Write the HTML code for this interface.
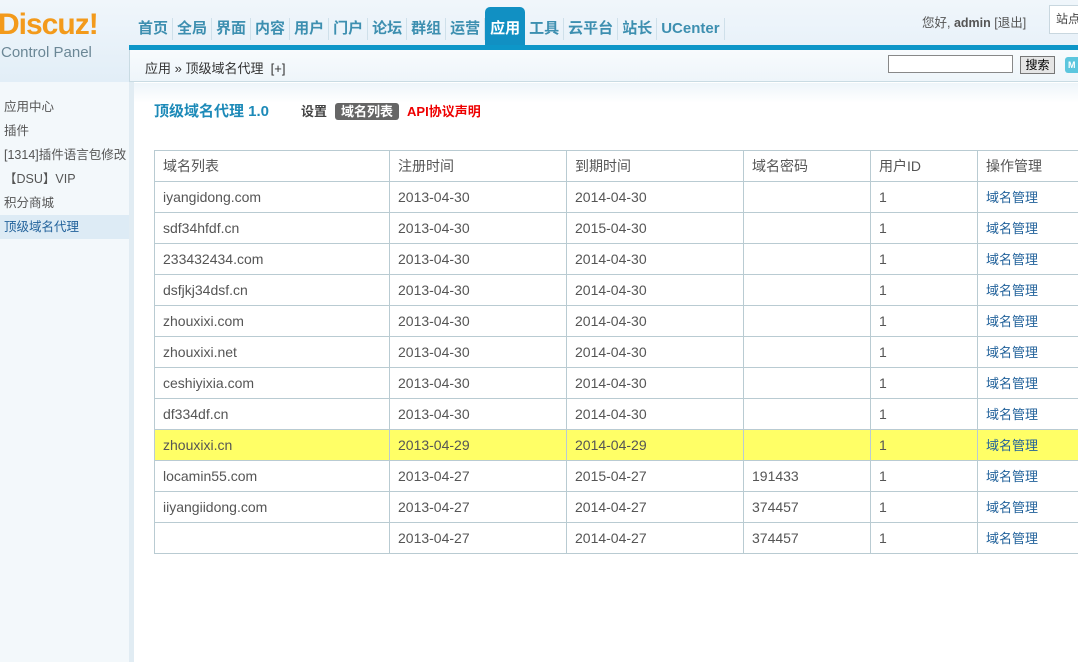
<!DOCTYPE html>
<html><head><meta charset="utf-8"><style>
*{margin:0;padding:0;box-sizing:border-box}
body{width:1078px;height:662px;overflow:hidden;background:#fff;font-family:"Liberation Sans","Noto Sans CJK SC",sans-serif;font-size:12px;color:#333;position:relative}
.top{position:absolute;left:0;top:0;width:1078px;height:82px;background:linear-gradient(#f0f6fb,#e2eef7)}
.logo1{position:absolute;left:-2px;top:8px;font:bold 30px "Liberation Sans",sans-serif;color:#f39a1b;letter-spacing:-1px}
.logo2{position:absolute;left:1px;top:44px;font-size:15px;color:#6b8796}
.nav{position:absolute;left:134px;top:18px;display:flex;font-size:15px;color:#3d8fb0;font-weight:bold}
.nav span{padding:0 4px;border-right:1px solid #cfe0ea;height:22px;line-height:22px}
.nav .act{background:#1190c3;color:#fff;border-radius:5px 5px 0 0;height:38px;margin-top:-11px;line-height:44px;padding:0 5px;border:none}
.bar{position:absolute;left:129px;top:45px;width:949px;height:5px;background:#0d96c8}
.crumb{position:absolute;left:129px;top:50px;width:949px;height:32px;background:linear-gradient(#f8fbfd,#eef5fa);border-bottom:1px solid #c9dbe3;border-left:1px solid #c9dbe3}
.crumb .t{position:absolute;left:15px;top:8px;font-size:13px;color:#333}
.srch{position:absolute;left:758px;top:5px;width:125px;height:18px;border:1px solid #888;background:#fff}
.sbtn{position:absolute;left:890px;top:6px;width:35px;height:18px;border:1px solid #777;background:#e5e5e5;font-size:12px;text-align:center;line-height:16px;color:#000}
.m{position:absolute;left:935px;top:7px;width:16px;height:16px;background:#5cc6de;border-radius:3px;color:#fff;font-size:9px;font-weight:bold;line-height:16px;padding-left:3px}
.user{position:absolute;left:922px;top:12px;font-size:12.5px;color:#555}
.zd{position:absolute;left:1049px;top:5px;width:40px;height:29px;border:1px solid #c9d7df;background:#fff;font-size:12px;line-height:27px;padding-left:6px;color:#444}
.main{position:absolute;left:134px;top:83px;width:944px;height:20px;background:linear-gradient(#eef5fa,#fff)}
.side{position:absolute;left:0;top:82px;width:134px;height:580px;background:#f3f8fb;border-right:5px solid #e1ecf3}
.side div{height:24px;line-height:24px;padding-left:4px;font-size:12.5px;color:#555;white-space:nowrap;overflow:hidden}
.side .on{background:#ddebf5;color:#22629b}
.title{position:absolute;left:154px;top:100px;font-size:15px;font-weight:bold;color:#1d8ab8}
.tabs{position:absolute;left:301px;top:101px;font-size:13px;font-weight:bold}
.tabs .a{background:#666;color:#fff;padding:1px 6px;border-radius:3px;margin:0 8px 0 8px}
table{position:absolute;left:154px;top:150px;border-collapse:collapse;width:940px}
td{border:1px solid #b9cbd2;height:31px;padding:0 0 0 8px;font-size:14px;color:#555;line-height:29px;white-space:nowrap}
td a{color:#22629b;text-decoration:none;font-size:13px;vertical-align:top}
tr.y td{background:#ffff66}
</style></head><body>
<div class="top"></div>
<div class="logo1">Discuz!</div>
<div class="logo2">Control Panel</div>
<div class="nav"><span>首页</span><span>全局</span><span>界面</span><span>内容</span><span>用户</span><span>门户</span><span>论坛</span><span>群组</span><span>运营</span><span class="act">应用</span><span>工具</span><span>云平台</span><span>站长</span><span>UCenter</span></div>
<div class="user">您好, <b>admin</b> [退出]</div>
<div class="zd">站点</div>
<div class="bar"></div>
<div class="crumb"><div class="t">应用 » 顶级域名代理 &nbsp;[+]</div><div class="srch"></div><div class="sbtn">搜索</div><div class="m">M</div></div>
<div class="main"></div>
<div class="side"><div style="height:13px"></div><div>应用中心</div><div>插件</div><div>[1314]插件语言包修改</div><div>【DSU】VIP</div><div>积分商城</div><div class="on">顶级域名代理</div></div>
<div class="title">顶级域名代理 1.0</div>
<div class="tabs"><span style="color:#444">设置</span><span class="a">域名列表</span><span style="color:#e00">API协议声明</span></div>
<table>
<colgroup><col style="width:235px"><col style="width:177px"><col style="width:177px"><col style="width:127px"><col style="width:107px"><col></colgroup>
<tr><td>域名列表</td><td>注册时间</td><td>到期时间</td><td>域名密码</td><td>用户ID</td><td>操作管理</td></tr>
<tr><td>iyangidong.com</td><td>2013-04-30</td><td>2014-04-30</td><td></td><td>1</td><td><a>域名管理</a></td></tr>
<tr><td>sdf34hfdf.cn</td><td>2013-04-30</td><td>2015-04-30</td><td></td><td>1</td><td><a>域名管理</a></td></tr>
<tr><td>233432434.com</td><td>2013-04-30</td><td>2014-04-30</td><td></td><td>1</td><td><a>域名管理</a></td></tr>
<tr><td>dsfjkj34dsf.cn</td><td>2013-04-30</td><td>2014-04-30</td><td></td><td>1</td><td><a>域名管理</a></td></tr>
<tr><td>zhouxixi.com</td><td>2013-04-30</td><td>2014-04-30</td><td></td><td>1</td><td><a>域名管理</a></td></tr>
<tr><td>zhouxixi.net</td><td>2013-04-30</td><td>2014-04-30</td><td></td><td>1</td><td><a>域名管理</a></td></tr>
<tr><td>ceshiyixia.com</td><td>2013-04-30</td><td>2014-04-30</td><td></td><td>1</td><td><a>域名管理</a></td></tr>
<tr><td>df334df.cn</td><td>2013-04-30</td><td>2014-04-30</td><td></td><td>1</td><td><a>域名管理</a></td></tr>
<tr class="y"><td>zhouxixi.cn</td><td>2013-04-29</td><td>2014-04-29</td><td></td><td>1</td><td><a>域名管理</a></td></tr>
<tr><td>locamin55.com</td><td>2013-04-27</td><td>2015-04-27</td><td>191433</td><td>1</td><td><a>域名管理</a></td></tr>
<tr><td>iiyangiidong.com</td><td>2013-04-27</td><td>2014-04-27</td><td>374457</td><td>1</td><td><a>域名管理</a></td></tr>
<tr><td></td><td>2013-04-27</td><td>2014-04-27</td><td>374457</td><td>1</td><td><a>域名管理</a></td></tr>
</table>
</body></html>
